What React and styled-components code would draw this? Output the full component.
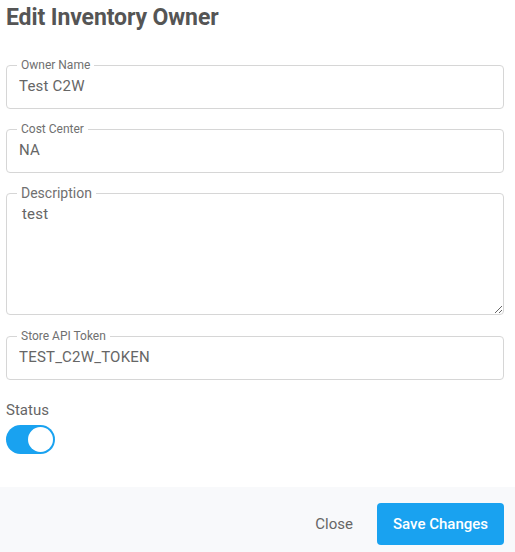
import React, { useState } from "react";
import styled, { createGlobalStyle } from "styled-components";

const GlobalStyle = createGlobalStyle`
  html, body {
    margin: 0;
    padding: 0;
    background: #ffffff;
    font-family: Roboto, "Noto Sans", Arial, sans-serif;
  }
  * { box-sizing: border-box; }
`;

const Modal = styled.div`
  width: 515px;
  height: 552px;
  display: flex;
  flex-direction: column;
  background: #fff;
`;

const Body = styled.div`
  flex: 1;
  padding: 4px 11px 0 6px;
  display: flex;
  flex-direction: column;
`;

const Title = styled.h2`
  margin: 0 0 26px;
  font-size: 23px;
  line-height: 28px;
  font-weight: 700;
  color: #555;
  letter-spacing: -0.1px;
`;

const Field = styled.fieldset`
  margin: 0 0 ${(p) => p.$gap}px;
  padding: 0 ${(p) => (p.$area ? 0 : 12)}px ${(p) => (p.$area ? 0 : 11)}px 12px;
  border: 1px solid #d6d6d6;
  border-radius: 4px;
  min-width: 0;
`;

const Legend = styled.legend`
  margin-left: -2px;
  padding: 0 4px;
  font-size: ${(p) => (p.$big ? 14 : 12)}px;
  line-height: ${(p) => (p.$big ? 16 : 14)}px;
  color: #707070;
`;

const Input = styled.input`
  display: block;
  width: 100%;
  margin: 3px 0 0;
  padding: 0;
  height: 22px;
  border: none;
  outline: none;
  background: transparent;
  font-family: inherit;
  font-size: 15px;
  letter-spacing: 0.2px;
  color: #666;
`;

const TextArea = styled.textarea`
  display: block;
  width: 100%;
  height: 113px;
  margin: 0;
  padding: 2px 12px 0 3px;
  border: none;
  outline: none;
  resize: vertical;
  background: transparent;
  font-family: inherit;
  font-size: 15px;
  letter-spacing: 0.2px;
  line-height: 22px;
  color: #666;
`;

const StatusLabel = styled.div`
  margin-top: 3px;
  font-size: 15px;
  line-height: 20px;
  color: #666;
`;

const Toggle = styled.button`
  margin-top: 5px;
  width: 49px;
  height: 29px;
  padding: 2px;
  border: none;
  border-radius: 15px;
  background: ${(p) => (p.$on ? "#19a2f0" : "#cfd4da")};
  display: flex;
  justify-content: ${(p) => (p.$on ? "flex-end" : "flex-start")};
  align-items: center;
  cursor: pointer;
`;

const Thumb = styled.span`
  width: 25px;
  height: 25px;
  border-radius: 50%;
  background: #fff;
`;

const Footer = styled.div`
  height: 65px;
  background: #f8f9fb;
  display: flex;
  justify-content: flex-end;
  align-items: flex-start;
  gap: 10px;
  padding: 16px 11px 0 0;
`;

const Button = styled.button`
  height: 42px;
  padding: 0 ${(p) => (p.$primary ? 16 : 14)}px;
  border: none;
  border-radius: 4px;
  background: ${(p) => (p.$primary ? "#19a2f0" : "transparent")};
  color: ${(p) => (p.$primary ? "#fff" : "#666")};
  font-family: inherit;
  font-size: 15px;
  font-weight: ${(p) => (p.$primary ? 500 : 400)};
  cursor: pointer;
`;

export default function App() {
  const [name, setName] = useState("Test C2W");
  const [cost, setCost] = useState("NA");
  const [desc, setDesc] = useState("test");
  const [token, setToken] = useState("TEST_C2W_TOKEN");
  const [active, setActive] = useState(true);

  return (
    <Modal>
      <GlobalStyle />
      <Body>
        <Title>Edit Inventory Owner</Title>
        <Field $gap={13}>
          <Legend>Owner Name</Legend>
          <Input value={name} onChange={(e) => setName(e.target.value)} />
        </Field>
        <Field $gap={12}>
          <Legend>Cost Center</Legend>
          <Input value={cost} onChange={(e) => setCost(e.target.value)} />
        </Field>
        <Field $gap={14} $area>
          <Legend $big>Description</Legend>
          <TextArea value={desc} onChange={(e) => setDesc(e.target.value)} />
        </Field>
        <Field $gap={17}>
          <Legend>Store API Token</Legend>
          <Input value={token} onChange={(e) => setToken(e.target.value)} />
        </Field>
        <StatusLabel>Status</StatusLabel>
        <Toggle $on={active} onClick={() => setActive(!active)}>
          <Thumb />
        </Toggle>
      </Body>
      <Footer>
        <Button>Close</Button>
        <Button $primary>Save Changes</Button>
      </Footer>
    </Modal>
  );
}
